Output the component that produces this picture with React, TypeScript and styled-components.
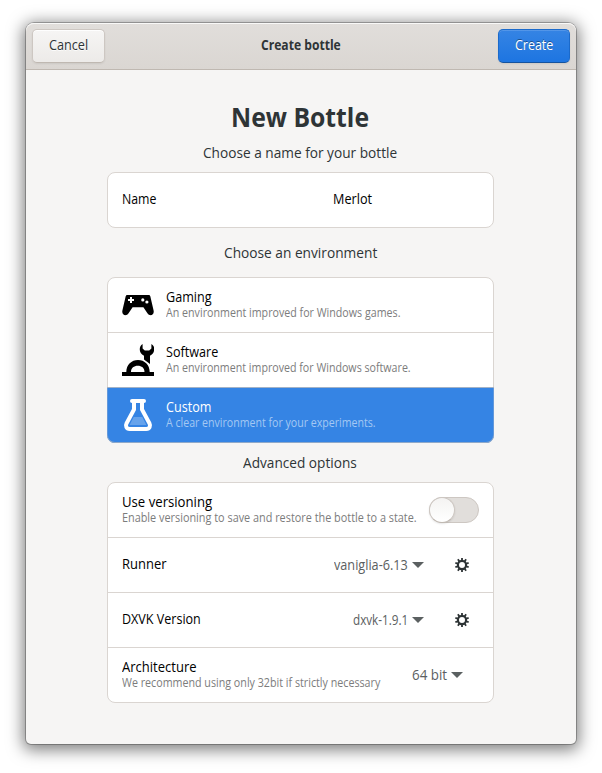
import React from 'react';
import styled, { createGlobalStyle } from 'styled-components';

const GlobalStyle = createGlobalStyle`
  * { box-sizing: border-box; }
  body {
    margin: 0;
    background: #fff;
    color: #2e3436;
    font-family: "Open Sans", "Noto Sans", sans-serif;
    font-size: 14px;
  }
  button { font: inherit; color: inherit; margin: 0; }
`;

const Desktop = styled.div`
  width: 602px;
  height: 773px;
  padding: 23px 26px 29px;
  overflow: hidden;
`;

const Window = styled.main`
  height: 721px;
  display: flex;
  flex-direction: column;
  background: #f6f5f4;
  border-radius: 8px 8px 5px 5px;
  box-shadow: 0 0 0 1px rgba(0, 0, 0, 0.25), 0 3px 16px 3px rgba(0, 0, 0, 0.5);
`;

const HeaderBar = styled.header`
  display: grid;
  grid-template-columns: 1fr auto 1fr;
  align-items: center;
  height: 47px;
  padding: 0 6px 1px;
  border-bottom: 1px solid #bfb8b1;
  border-radius: 8px 8px 0 0;
  background: linear-gradient(to top, #dad6d2, #e1dedb);
  box-shadow: inset 0 1px rgba(255, 255, 255, 0.8);
`;

/* Condensed text: $w is the advance width on screen, $k the horizontal squeeze. */
const Condensed = styled.span<{ $w: number; $k: number }>`
  display: block;
  width: ${(p) => p.$w}px;
  white-space: nowrap;
  transform: scaleX(${(p) => p.$k});
  transform-origin: left center;
`;

const HeaderTitle = styled(Condensed)`
  font-weight: 700;
  line-height: 20px;
  padding-bottom: 1px;
`;

const Button = styled.button<{ $suggested?: boolean }>`
  display: flex;
  align-items: center;
  justify-content: center;
  width: ${(p) => (p.$suggested ? 72 : 73)}px;
  height: 34px;
  padding: 0 0 2px;
  justify-self: ${(p) => (p.$suggested ? 'end' : 'start')};
  border: 1px solid ${(p) => (p.$suggested ? '#1b6acb' : '#cdc7c2')};
  border-bottom-color: ${(p) => (p.$suggested ? '#15539e' : '#bfb8b1')};
  border-radius: 5px;
  color: ${(p) => (p.$suggested ? '#fff' : '#2e3436')};
  background: ${(p) =>
    p.$suggested
      ? 'linear-gradient(to top, #1f76e1 2px, #3584e4)'
      : 'linear-gradient(to top, #edebe9 2px, #f6f5f4)'};
  box-shadow: inset 0 1px rgba(255, 255, 255, ${(p) => (p.$suggested ? 0.15 : 0.9)}),
    0 1px 2px rgba(0, 0, 0, 0.07);
  text-shadow: ${(p) => (p.$suggested ? '0 -1px rgba(0, 0, 0, 0.4)' : '0 1px rgba(255, 255, 255, 0.8)')};
`;

const Content = styled.div`
  display: flex;
  flex-direction: column;
  padding: 29px 82px 0 81px;
`;

const Title = styled.h1`
  display: flex;
  justify-content: center;
  margin: 0 0 7px;
  font-size: 27px;
  line-height: 36px;
  font-weight: 700;
`;

const SectionLabel = styled.h2<{ $top?: number; $bottom?: number }>`
  display: flex;
  justify-content: center;
  margin: ${(p) => p.$top ?? 0}px 0 ${(p) => p.$bottom ?? 10}px;
  font-size: 15px;
  line-height: 20px;
  font-weight: 400;
`;

const Card = styled.section`
  border: 1px solid #dad5d1;
  border-radius: 8px;
  background: #fff;

  > * {
    height: 54px;
  }
  > * + * {
    height: 55px;
    border-top: 1px solid #dad5d1;
  }
`;

const Row = styled.div`
  display: flex;
  align-items: center;
  padding: 0 14px;
  color: #000;
`;

/* The selected row paints over the card's own side and bottom borders. */
const SelectedRow = styled(Row)`
  && {
    height: 56px;
    margin: 0 -1px -1px;
    padding: 0 15px 1px;
    border-top-color: #a3b2c6;
    border-radius: 0 0 8px 8px;
    color: #fff;
    background: #3584e4;
    box-shadow: inset 0 -1px #8fa9c9, inset 1px 0 rgba(205, 199, 194, 0.3),
      inset -1px 0 rgba(205, 199, 194, 0.3);
  }
`;

const Labels = styled.div`
  flex: 1;
  min-width: 0;
`;

const RowTitle = styled(Condensed)<{ $single?: boolean }>`
  line-height: 16px;
  margin-bottom: ${(p) => (p.$single ? 2 : 0)}px;
`;

const RowSubtitle = styled(Condensed)<{ $light?: boolean }>`
  font-size: 12px;
  line-height: 16px;
  color: ${(p) => (p.$light ? '#a4c8f3' : '#7c7c7c')};
`;

const Entry = styled.div`
  width: 146px;
  line-height: 16px;
  padding-bottom: 2px;
`;

const IconSlot = styled.div`
  display: flex;
  width: 32px;
  height: 32px;
  margin-right: 12px;
`;

const Dropdown = styled.button<{ $end: number }>`
  display: flex;
  align-items: center;
  gap: 4px;
  margin-right: ${(p) => p.$end}px;
  padding: 0 0 1px;
  border: 0;
  background: none;
  color: #5b6061;
  line-height: 18px;
`;

const IconButton = styled.button`
  display: flex;
  align-items: center;
  justify-content: center;
  width: 34px;
  height: 34px;
  padding: 0;
  border: 0;
  background: none;
  color: #2e3436;
`;

const Switch = styled.button`
  display: flex;
  width: 50px;
  height: 26px;
  padding: 0;
  border: 1px solid #cdc7c2;
  border-radius: 13px;
  background: #e1dedb;
`;

const Knob = styled.span`
  width: 26px;
  height: 26px;
  margin: -1px;
  border: 1px solid #cdc7c2;
  border-bottom-color: #bfb8b1;
  border-radius: 50%;
  background: linear-gradient(#f4f3f2, #fff);
  box-shadow: 0 1px 2px rgba(0, 0, 0, 0.1);
`;

const GamepadIcon = () => (
  <svg width="32" height="32" viewBox="0 0 32 32">
    <path
      fill="currentColor"
      fillRule="evenodd"
      d="M5.2 6H26.8Q28 6 28.3 7.3L31.6 21.5C32.3 25.2 30 26.6 27.6 26.1Q26.4 25.8 25.6 24.5L21.4 18.3H10.6L6.4 24.5Q5.6 25.8 4.4 26.1C2 26.6-.3 25.2.4 21.5L3.7 7.3Q4 6 5.2 6ZM8 8V10H6V12H8V14H10V12H12V10H10V8ZM20.8 9.3A1.6 1.6 0 1 0 20.8 12.5A1.6 1.6 0 1 0 20.8 9.3ZM24.9 11.4A1.6 1.6 0 1 0 24.9 14.6A1.6 1.6 0 1 0 24.9 11.4Z"
    />
  </svg>
);

const SoftwareIcon = () => (
  <svg width="32" height="32" viewBox="0 0 32 32" fill="currentColor">
    <path d="M0 28H4.3C4.3 20.8 9.5 16 16 16S27.7 20.8 27.7 28H32V32H0ZM9 28H22.5C22.5 24 19.6 21.8 15.8 21.8S9 24 9 28Z" />
    <path d="M20.6 0C16.4 2.4 16.8 9.4 22 11.8V15.4L28 20V11.8C33.2 9.4 33.6 2.4 29.4 0V4.4L27.2 6.4H22.8L20.6 4.4Z" />
  </svg>
);

const FlaskIcon = () => (
  <svg width="32" height="32" viewBox="0 0 32 32">
    <path d="M11.7 18H20.3L24.4 26H7.6Z" fill="#fff" opacity=".25" />
    <path
      d="M12 2V10.5L4.6 24.2C3.2 27 4.3 29.9 7.7 29.9H24.3C27.7 29.9 28.8 27 27.4 24.2L20 10.5V2M10 2H22"
      fill="none"
      stroke="#fff"
      strokeWidth="4"
      strokeLinecap="round"
      strokeLinejoin="round"
    />
  </svg>
);

const TEETH = [0, 36, 72, 108, 144, 180, 216, 252, 288, 324];

const GearIcon = () => (
  <svg width="14" height="14" viewBox="-7 -7 14 14">
    <circle r="4.1" fill="none" stroke="currentColor" strokeWidth="2.2" />
    {TEETH.map((a) => (
      <rect key={a} x="-.9" y="-7" width="1.8" height="3" fill="currentColor" transform={`rotate(${a})`} />
    ))}
  </svg>
);

const Arrow = () => (
  <svg width="12" height="6" viewBox="0 0 12 6">
    <path d="M0 0H12L6 6Z" fill="currentColor" />
  </svg>
);

export default function App() {
  return (
    <>
      <GlobalStyle />
      <Desktop>
        <Window>
          <HeaderBar>
            <Button>
              <Condensed $w={39} $k={0.905}>Cancel</Condensed>
            </Button>
            <HeaderTitle $w={80} $k={0.865}>Create bottle</HeaderTitle>
            <Button $suggested>
              <Condensed $w={38} $k={0.89}>Create</Condensed>
            </Button>
          </HeaderBar>
          <Content>
            <Title>
              <Condensed $w={139} $k={0.917}>New Bottle</Condensed>
            </Title>
            <SectionLabel>
              <Condensed $w={195.5} $k={0.911}>Choose a name for your bottle</Condensed>
            </SectionLabel>
            <Card>
              <Row>
                <Labels>
                  <RowTitle $single $w={35} $k={0.88}>Name</RowTitle>
                </Labels>
                <Entry>
                  <Condensed $w={40} $k={0.905}>Merlot</Condensed>
                </Entry>
              </Row>
            </Card>
            <SectionLabel $top={14} $bottom={15}>
              <Condensed $w={153.5} $k={0.914}>Choose an environment</Condensed>
            </SectionLabel>
            <Card>
              <Row>
                <IconSlot><GamepadIcon /></IconSlot>
                <Labels>
                  <RowTitle $w={46} $k={0.9}>Gaming</RowTitle>
                  <RowSubtitle $w={235} $k={0.89}>An environment improved for Windows games.</RowSubtitle>
                </Labels>
              </Row>
              <Row>
                <IconSlot><SoftwareIcon /></IconSlot>
                <Labels>
                  <RowTitle $w={53} $k={0.9}>Software</RowTitle>
                  <RowSubtitle $w={246} $k={0.888}>An environment improved for Windows software.</RowSubtitle>
                </Labels>
              </Row>
              <SelectedRow>
                <IconSlot><FlaskIcon /></IconSlot>
                <Labels>
                  <RowTitle $w={46} $k={0.9}>Custom</RowTitle>
                  <RowSubtitle $light $w={210} $k={0.883}>A clear environment for your experiments.</RowSubtitle>
                </Labels>
              </SelectedRow>
            </Card>
            <SectionLabel $top={9}>
              <Condensed $w={114.5} $k={0.91}>Advanced options</Condensed>
            </SectionLabel>
            <Card>
              <Row>
                <Labels>
                  <RowTitle $w={91} $k={0.94}>Use versioning</RowTitle>
                  <RowSubtitle $w={296} $k={0.905}>Enable versioning to save and restore the bottle to a state.</RowSubtitle>
                </Labels>
                <Switch role="switch" aria-checked={false}><Knob /></Switch>
              </Row>
              <Row>
                <Labels>
                  <RowTitle $single $w={45} $k={0.927}>Runner</RowTitle>
                </Labels>
                <Dropdown $end={21}>
                  <Condensed $w={74} $k={0.905}>vaniglia-6.13</Condensed>
                  <Arrow />
                </Dropdown>
                <IconButton><GearIcon /></IconButton>
              </Row>
              <Row>
                <Labels>
                  <RowTitle $single $w={79} $k={0.896}>DXVK Version</RowTitle>
                </Labels>
                <Dropdown $end={21}>
                  <Condensed $w={55} $k={0.835}>dxvk-1.9.1</Condensed>
                  <Arrow />
                </Dropdown>
                <IconButton><GearIcon /></IconButton>
              </Row>
              <Row>
                <Labels>
                  <RowTitle $w={75} $k={0.93}>Architecture</RowTitle>
                  <RowSubtitle $w={259} $k={0.892}>We recommend using only 32bit if strictly necessary</RowSubtitle>
                </Labels>
                <Dropdown $end={16}>
                  <Condensed $w={35.5} $k={0.955}>64 bit</Condensed>
                  <Arrow />
                </Dropdown>
              </Row>
            </Card>
          </Content>
        </Window>
      </Desktop>
    </>
  );
}
